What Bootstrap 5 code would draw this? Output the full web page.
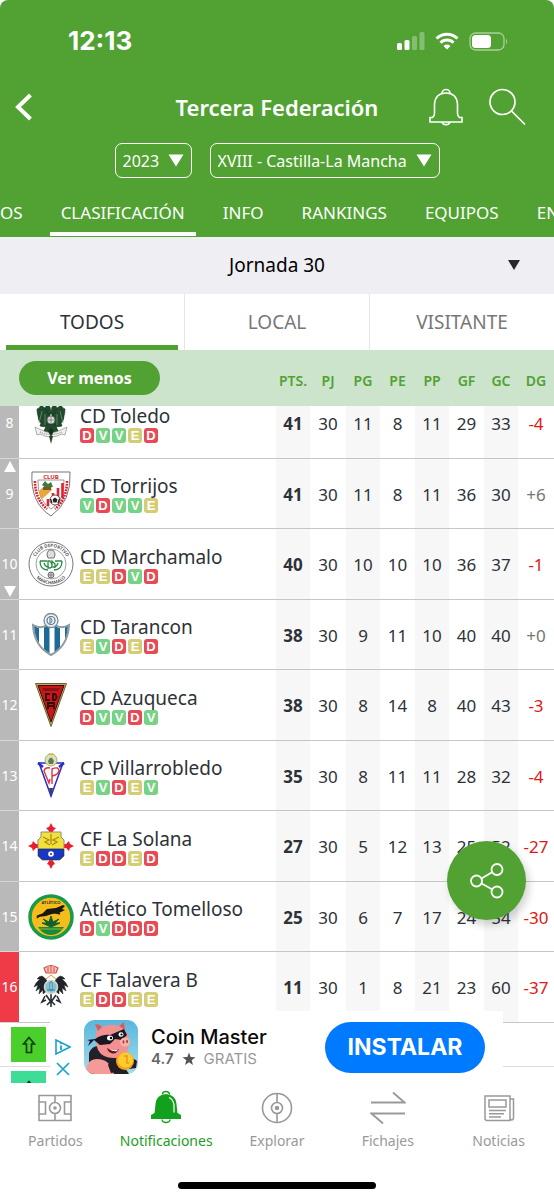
<!DOCTYPE html>
<html lang="es">
<head>
<meta charset="utf-8">
<meta name="viewport" content="width=device-width, initial-scale=1">
<title>Tercera Federación</title>
<link href="https://cdn.jsdelivr.net/npm/bootstrap@5.3.0/dist/css/bootstrap.min.css" rel="stylesheet">
<style>
  :root { --brand: #51a233; --ink: #2e3238; --pale: #cbe4cb; }
  body { font-family: "Noto Sans", sans-serif; color: var(--ink); background: #fff; }
  a { text-decoration: none; }
  svg { display: block; flex: none; }
  .app { height: 100vh; min-height: 800px; }

  .top { background: var(--brand); border-radius: 8px 8px 0 0; }
  .status { height: 82px; padding: 0 46px 0 68px; }
  .clock { font: 700 26px/32px Inter, sans-serif; }
  .bar { height: 50px; display: grid; grid-template-columns: 1fr auto 1fr; align-items: center; padding: 0 28px 0 28px; }
  .bar h1 { font-size: 22px; line-height: 30px; font-weight: 600; }
  .back { margin-left: -14px; }
  .plain { background: none; border: 0; padding: 0; color: inherit; }
  .pickers { gap: 18px; padding: 11px 0; }
  .picker { border: 1px solid #fff; border-radius: 7px; height: 35px; padding: 0 7px; gap: 8px; }
  select { appearance: none; border: 0; background: transparent; color: inherit; padding: 0; font-size: 16px; line-height: 24px; outline: 0; }
  .sections { height: 48px; gap: 16px; overflow: hidden; font-size: 17px; line-height: 24px; }
  .sections a { color: #fff; padding: 12px 11px 0; border-bottom: 4px solid transparent; height: 47px; white-space: nowrap; }
  .sections a:first-child { padding-left: 0; }
  .sections a.active { border-color: #fff; }

  .round { background: #efeef3; height: 57px; color: #000; position: relative; }
  .round select { width: 100%; text-align: center; font-size: 19px; line-height: 57px; height: 57px; }
  .round svg { position: absolute; right: 34px; top: 23px; }
  .venues a { flex: 1 1 0; height: 56px; padding: 0 6px; color: #777; font-size: 19px; border-left: 1px solid #e6e6e8; }
  .venues a:first-child { border-left: 0; }
  .venues span { height: 56px; line-height: 56px; }
  .venues .active { color: var(--ink); }
  .venues .active span { border-bottom: 5px solid var(--brand); }

  .board { min-height: 0; position: relative; }
  .scroller { height: 100%; overflow-y: auto; overflow-x: hidden; scrollbar-width: none; }
  .scroller::-webkit-scrollbar { display: none; }
  .standings { table-layout: fixed; width: 100%; border-collapse: separate; border-spacing: 0; }
  .standings th, .standings td { padding: 0; }
  .standings thead th { position: sticky; top: 0; z-index: 2; background: var(--pale); height: 56px; color: var(--brand); font-size: 14px; font-weight: 600; text-align: center; vertical-align: middle; padding-top: 4px; }
  .standings thead th:first-child { text-align: left; padding: 0 0 0 19px; }
  .less { background: var(--brand); color: #fff; border: 0; border-radius: 17px; width: 141px; height: 34px; font-size: 16px; line-height: 24px; font-weight: 700; }
  .standings tbody td { border-bottom: 1px solid #c6c6c6; font-size: 17px; text-align: center; vertical-align: middle; white-space: nowrap; padding-top: 2px; }
  .standings .shade { background: #f7f7f7; }
  .standings .pts { font-weight: 700; }
  .standings .neg { color: #e01616; }
  .standings .pos { color: #777; }
  .standings tbody td.rank { background: #b9b9b9; color: #fff; font-size: 14px; border-color: #d6d6d6; padding: 0; }
  .standings tbody td.rank.drop { background: #ef3b48; }
  .rank > div { display: grid; grid-template-rows: 1fr auto 1fr; justify-items: center; height: 69px; line-height: 20px; padding: 2px 0; }
  tr:nth-child(odd) > .rank > div { height: 70px; }
  .rank .down { grid-row: 3; align-self: end; }
  .rank .num { grid-row: 2; }
  .standings tbody td.club { padding: 0; }
  .team { gap: 6px; padding-left: 9px; }
  .team-name { font-size: 19px; line-height: 24px; text-align: left; }
  .form { gap: 2px; }
  .form i { width: 14px; height: 15px; border-radius: 3px; color: #fff; font: 700 13px/15px "Liberation Sans", sans-serif; text-align: center; }
  .r-D { background: #e84a55; } .r-V { background: #76d285; } .r-E { background: #d5cd74; }
  .legend-line { height: 43px; padding: 4px 0 0 11px; }
  .legend-line + .legend-line { border-top: 1px solid #dcdcdc; }
  .swatch { width: 35px; height: 35px; display: grid; place-items: center; }

  .share { position: absolute; right: 28px; bottom: 163px; width: 79px; height: 79px; border-radius: 50%; background: var(--brand); border: 0; z-index: 3; box-shadow: 3px 5px 8px rgba(0,0,0,.18); display: grid; place-items: center; padding: 0; }
  .promo { position: absolute; left: 50px; right: 51px; bottom: 0; height: 72px; background: #fff; z-index: 3; padding: 0 18px 0 5px; gap: 13px; font-family: Inter, sans-serif; }
  .ad-tools { gap: 7px; padding-top: 24px; }
  .promo-name { font-size: 20px; line-height: 24px; font-weight: 500; color: #0a0a0a; }
  .promo-meta { font-size: 15px; line-height: 20px; color: #999; gap: 8px; }
  .promo-meta b { color: #666; font-weight: 600; }
  .install { background: #007aff; color: #fff; border: 0; border-radius: 26px; width: 160px; height: 51px; font-size: 23px; font-weight: 700; }

  .tabbar { padding-top: 6px; }
  .tabbar a { flex: 1 1 0; color: #999; font-size: 14px; line-height: 20px; gap: 6px; }
  .tabbar a.active { color: #1d9d24; }
  .home-bar { width: 198px; height: 7px; border-radius: 4px; background: #000; margin: 31px auto 11px; }
</style>
</head>
<body>
<div class="app d-flex flex-column">
  <header class="top text-white flex-shrink-0">
    <div class="status d-flex align-items-center justify-content-between">
      <span class="clock">12:13</span>
      <span class="d-flex align-items-center">
        <svg width="28" height="18" viewBox="0 0 28 18" fill="#fff"><rect x="0" y="11" width="5" height="7" rx="1.5"/><rect x="7.500" y="8" width="5" height="10" rx="1.500"/><rect x="15" y="4" width="5" height="14" rx="1.500" opacity=".3"/><rect x="22.500" y="0" width="5" height="18" rx="1.500" opacity=".3"/></svg>
        <svg class="mx-2" width="28" height="18" viewBox="0 0 24 18" fill="none" stroke="#fff" stroke-width="3"><path d="M1.500 6.500a15 15 0 0 1 21 0M5.500 10.800a9 9 0 0 1 13 0"/><path d="M12 17.500l-3.500-3.600a5 5 0 0 1 7 0z" fill="#fff" stroke="none"/></svg>
        <svg width="39" height="19" viewBox="0 0 39 19"><rect x="1" y="1" width="34" height="17" rx="5.500" fill="none" stroke="#fff" stroke-opacity=".5" stroke-width="1.300"/><rect x="3" y="3" width="19" height="13" rx="3.500" fill="#fff"/><path d="M37 6.500q2 3 0 6z" fill="#fff" opacity=".55"/></svg>
      </span>
    </div>
    <div class="bar">
      <button class="plain back text-start" aria-label="Volver"><svg width="20" height="28" viewBox="0 0 20 28" fill="none" stroke="#fff" stroke-width="4"><path d="M16.500 2L4 14l12.500 12"/></svg></button>
      <h1 class="m-0">Tercera Federación</h1>
      <span class="d-flex justify-content-end gap-4">
        <button class="plain" aria-label="Avisos"><svg width="36" height="38" viewBox="0 0 36 38" fill="none" stroke="#fff" stroke-width="1.600"><path d="M14 5.500a4 4 0 0 1 8 0M2 34v-4.500h2.500q2-1.500 2-4V16q1-11 11.500-11T29.500 16v9.500q0 2.500 2 4H34V34zM14 34.500a4.200 3 0 0 0 8 0"/></svg></button>
        <button class="plain" aria-label="Buscar"><svg width="38" height="38" viewBox="0 0 38 38" fill="none" stroke="#fff" stroke-width="1.700"><circle cx="14.500" cy="14" r="12.500"/><path d="M23.500 23L37 36.500"/></svg></button>
      </span>
    </div>
    <div class="pickers d-flex justify-content-center">
      <label class="picker d-flex align-items-center"><select aria-label="Temporada"><option>2023</option></select><svg width="16" height="13" viewBox="0 0 16 13" fill="#fff"><path d="M.5.500h15L8 12.500z"/></svg></label>
      <label class="picker d-flex align-items-center"><select aria-label="Grupo"><option>XVIII - Castilla-La Mancha</option></select><svg width="16" height="13" viewBox="0 0 16 13" fill="#fff"><path d="M.5.500h15L8 12.500z"/></svg></label>
    </div>
    <nav class="sections d-flex">
      <a href="#">OS</a><a href="#" class="active">CLASIFICACIÓN</a><a href="#">INFO</a><a href="#">RANKINGS</a><a href="#">EQUIPOS</a><a href="#">EN</a>
    </nav>
  </header>

  <div class="round flex-shrink-0">
    <select aria-label="Jornada"><option>Jornada 30</option></select>
    <svg width="12" height="10" viewBox="0 0 12 10" fill="#25282e"><path d="M0 0h12L6 10z"/></svg>
  </div>
  <nav class="venues d-flex flex-shrink-0 text-center">
    <a href="#" class="active"><span class="d-block">TODOS</span></a><a href="#"><span class="d-block">LOCAL</span></a><a href="#"><span class="d-block">VISITANTE</span></a>
  </nav>

  <main class="board flex-fill">
    <div class="scroller" id="scroller">
      <table class="standings">
        <colgroup><col style="width:19px"><col><col style="width:34px"><col style="width:36px"><col style="width:34px"><col style="width:35px"><col style="width:34px"><col style="width:35px"><col style="width:34px"><col style="width:36px"></colgroup>
        <thead><tr><th colspan="2"><button class="less">Ver menos</button></th><th>PTS.</th><th>PJ</th><th>PG</th><th>PE</th><th>PP</th><th>GF</th><th>GC</th><th>DG</th></tr></thead>
        <tbody id="rows"></tbody>
      </table>
      <div class="legend-line"><div class="swatch" style="background:#4bcf2c"><svg width="14" height="18" viewBox="0 0 14 18" fill="none" stroke="#143c0c" stroke-width="1.700"><path d="M7 1.500L1.500 8H4.500v8.500h5V8h3z"/></svg></div></div>
      <div class="legend-line"><div class="swatch" style="background:#3ddc97"><svg width="14" height="18" viewBox="0 0 14 18" fill="none" stroke="#143c0c" stroke-width="1.700"><path d="M7 1.500L1.500 8H4.500v8.500h5V8h3z"/></svg></div></div>
    </div>

    <button class="share" aria-label="Compartir"><svg width="36" height="38" viewBox="0 0 36 38" fill="none" stroke="#fff" stroke-width="1.800"><circle cx="7.500" cy="19" r="5.500"/><circle cx="28" cy="7.500" r="5.500"/><circle cx="28" cy="30" r="5.500"/><path d="M12.500 16.500L23 10.300M12.500 21.500L23 27.300"/></svg></button>

    <aside class="promo d-flex align-items-center">
      <span class="ad-tools d-flex flex-column align-self-start">
        <svg class="mt-1" width="16" height="16" viewBox="0 0 16 16" fill="none" stroke="#17a3cf" stroke-width="1.600"><path d="M1 1v14L15 8z"/><path d="M6 6.500V11M6 3.800v1.400" stroke-width="1.800"/></svg>
        <svg width="16" height="14" viewBox="0 0 16 14" fill="none" stroke="#17a3cf" stroke-width="1.700"><path d="M2 1l12 12M14 1L2 13"/></svg>
      </span>
      <svg width="54" height="54" viewBox="0 0 54 54">
        <defs><clipPath id="appclip"><rect width="54" height="54" rx="11"/></clipPath><linearGradient id="sky" x1="0" y1="0" x2="0" y2="1"><stop offset="0" stop-color="#58b7dc"/><stop offset="1" stop-color="#a6dcea"/></linearGradient></defs>
        <g clip-path="url(#appclip)">
          <rect width="54" height="54" fill="url(#sky)"/>
          <path d="M5 54V33q3-7 9-7l18 8 13 20z" fill="#23202a"/>
          <path d="M2 54q0-15 11-15 13 0 17 15z" fill="#f49a97"/>
          <path d="M13 9l-2-5q6 0 8 3 8-4 15-1l6-4 1 8q5 7 4 14-1 12-13 14-13 1-18-8-4-9-1-21z" fill="#f2918f"/>
          <path d="M11 4q5 0 7 3l-4 4zM40 2l1 8-6-4z" fill="#cc5f68"/>
          <path d="M3 20l8-1q8-5 15-4l14-6 3 6-5 5-7-1-5 5-10 1-6-5-6 6 2-5z" fill="#191722"/>
          <ellipse cx="26" cy="18" rx="3" ry="2.500" fill="#fff"/><ellipse cx="37" cy="14.500" rx="2.500" ry="2.200" fill="#fff"/><circle cx="27" cy="18" r="1.200"/><circle cx="37.500" cy="14.500" r="1.100"/>
          <ellipse cx="41" cy="22" rx="5" ry="4.500" fill="#fbb0a8"/><ellipse cx="39.500" cy="22" rx=".9" ry="1.700" fill="#9a3c45"/><ellipse cx="43" cy="21.500" rx=".9" ry="1.700" fill="#9a3c45"/>
          <path d="M23 28q6 4 12 1-3 6-8 4-3-1-4-5z" fill="#611724"/><path d="M25 29q5 2 9 .5l-1 1.500q-4 1-8-2z" fill="#fff"/>
          <path d="M24 45q2-5 9-3l4 9-10 2zM46 41q3-4 7 0l-1 7-7 1z" fill="#231c20"/>
          <circle cx="41" cy="41" r="9" fill="#f2a71b"/><circle cx="41.500" cy="40" r="7.500" fill="#fecb2e"/><path d="M40 36h3v7h2" fill="none" stroke="#e99b13" stroke-width="1.500"/>
        </g>
      </svg>
      <span class="me-auto text-nowrap">
        <span class="promo-name d-block">Coin Master</span>
        <span class="promo-meta d-flex align-items-center"><b>4.7</b><svg width="14" height="14" viewBox="0 0 14 14" fill="#555"><path d="M7 .5l1.700 4.600 4.800.2-3.800 3 1.300 4.700L7 10.300 3 13l1.300-4.700-3.800-3 4.800-.2z"/></svg><span>GRATIS</span></span>
      </span>
      <button class="install">INSTALAR</button>
    </aside>
  </main>

  <footer class="flex-shrink-0">
    <nav class="tabbar d-flex">
      <a href="#" class="d-flex flex-column align-items-center"><svg width="36" height="36" viewBox="0 0 36 36" fill="none" stroke="#999" stroke-width="1.600"><path d="M2 6.500h32v25H2zM18 6.500v25M2 13h6.500v12H2M34 13h-6.500v12H34"/><circle cx="18" cy="19" r="5.500" fill="#fff"/><circle cx="18" cy="19" r="1" fill="#999"/></svg>Partidos</a>
      <a href="#" class="active d-flex flex-column align-items-center"><svg width="36" height="36" viewBox="0 0 36 36" fill="#13a01c"><path d="M3 30v-4l3.500-2Q7 21 7.500 15 8 6 18 5q10 1 10.500 10 .5 6 1 9l3.500 2v4z"/><path d="M14.500 5.500a3.500 3 0 0 1 7 0M14 30.500a4 3 0 0 0 8 0" fill="none" stroke="#13a01c" stroke-width="1.500"/><path d="M21 8.500q4.500 2 5 8v7" fill="none" stroke="#fff" stroke-width="1.200"/></svg>Notificaciones</a>
      <a href="#" class="d-flex flex-column align-items-center"><svg width="36" height="36" viewBox="0 0 36 36" fill="none" stroke="#999" stroke-width="1.600"><circle cx="18" cy="19" r="14.500"/><path d="M18 4.500v29"/><circle cx="18" cy="19" r="5.500" fill="#fff"/><circle cx="18" cy="19" r="1.500" fill="#999"/></svg>Explorar</a>
      <a href="#" class="d-flex flex-column align-items-center"><svg width="36" height="36" viewBox="0 0 36 36" fill="none" stroke="#999" stroke-width="1.800"><path d="M1 13.500h33.500L23 3.500M35 24.500H1.500L13 34.500"/></svg>Fichajes</a>
      <a href="#" class="d-flex flex-column align-items-center"><svg width="36" height="36" viewBox="0 0 36 36" fill="none" stroke="#999" stroke-width="1.500"><path d="M4 7h25v24.500H6q-2 0-2-2zM29 10h3.500v19.500a1.800 1.800 0 0 1-3.500 0M8 11h17v7H8zM8 21.500h17M8 24.800h15M8 28h12"/></svg>Noticias</a>
    </nav>
    <div class="home-bar"></div>
  </footer>
</div>

<script src="https://cdn.jsdelivr.net/npm/bootstrap@5.3.0/dist/js/bootstrap.bundle.min.js"></script>
<script>
const eagleWing = 'M-1-6q-4-6-9-9-1 3-4 4 0 4 1 7 0 5 3 7l-1 3q5 2 10-1z';
const crests = {
  toledo: `<g fill="#1f4a2c" stroke="#163220" stroke-width=".6"><path transform="translate(23 20)" d="${eagleWing}"/><path transform="translate(23 20) scale(-1 1)" d="${eagleWing}"/><path d="M17 8q2-5 5-1l1 5 1-5q3-4 5 1l-3 6h-6zM19 24h8l3 7-7 4-7-4z"/></g><path d="M14 11l-3 12M32 11l3 12M17 14v11M29 14v11" stroke="#6d9474" stroke-width=".8"/><circle cx="23" cy="20" r="4" fill="#dde3db" stroke="#555" stroke-width=".8"/><path d="M20 20h6M23 17v6" stroke="#777" stroke-width=".8"/><path d="M7 27l4 2q12 7 24 0l4-2-2 8-3-1q-11 6-22 0l-3 1z" fill="#f3f3ef" stroke="#8b8b88" stroke-width=".7"/><path d="M12 32q11 5 22 0" stroke="#9a9a98" stroke-width="1.400" stroke-dasharray="1 1" fill="none"/><path d="M21 36h4l-2 8z" fill="#29452e"/><path d="M20 31l3-3 3 3-3 6z" fill="#17301e"/>`,
  torrijos: `<path d="M4 1h38q2 29-19 44Q2 32 4 1z" fill="#fff" stroke="#666" stroke-width=".9"/><path d="M10 9h26q1 20-13 29Q9 29 10 9z" fill="#fff" stroke="#555" stroke-width=".6"/><path d="M11 20q6-7 12-3l1 2-10 9q-3-4-3-8z" fill="#e9a63a"/><path d="M14 14l3-4 3 3 3-2 2 5-7 1z" fill="#3d7a3c"/><path d="M15 16h8v3h-8z" fill="#76592a"/><g stroke="#dc2431" stroke-width="2.600"><path d="M34.500 12v15M30 17v16M25 22v4M20 28v7"/></g><circle cx="27" cy="29" r="5" fill="#fff" stroke="#333" stroke-width=".8"/><path d="M27 26.500l2.500 2-1 3h-3l-1-3z" fill="#222"/><path d="M22.500 28l1.500 4M31.500 28L30 32" stroke="#222" stroke-width="1.300"/><text x="23" y="7.500" text-anchor="middle" font-size="6" font-weight="700" fill="#e01d2a">CLUB</text><path d="M7 10q0 18 12 28" fill="none" stroke="#e01d2a" stroke-width="2.600" stroke-dasharray="1.800 1"/><path d="M39 10q0 18-12 28" fill="none" stroke="#e01d2a" stroke-width="2.600" stroke-dasharray="1.800 1"/>`,
  marchamalo: `<circle cx="23" cy="23" r="22" fill="#fff" stroke="#666" stroke-width=".9"/><circle cx="23" cy="23" r="15" fill="#fff" stroke="#777" stroke-width=".7"/><path id="mTop" d="M6 23a17 17 0 0 1 34 0" fill="none"/><path id="mBot" d="M2.800 23a20.200 20.200 0 0 0 40.400 0" fill="none"/><g font-size="4.500" font-weight="600" fill="#444"><text text-anchor="middle"><textPath href="#mTop" startOffset="50%">CLUB DEPORTIVO</textPath></text><text text-anchor="middle"><textPath href="#mBot" startOffset="50%">MARCHAMALO</textPath></text></g><g fill="none" stroke="#2b8b45" stroke-width="1.300"><path d="M12 20h7M12 20q0 9 8 9M34 20h-7M34 20q0 9-8 9M16 22q1 4 5 4M30 22q-1 4-5 4M20 20v7h2q4-1 0-7zM24 27v-7l3 3v4"/></g><path d="M19 14q0-5 4-5t4 5l-1 3h-6z" fill="#ddd" stroke="#555" stroke-width=".8"/><circle cx="23" cy="34" r="3" fill="#ccc" stroke="#555" stroke-width=".8"/><path d="M20 34h6M23 31v6" stroke="#666" stroke-width=".6"/>`,
  tarancon: `<path d="M5 13q7 4 12 1h12q5 3 12-1-1 21-18 30Q6 34 5 13z" fill="#fff"/><clipPath id="tc"><path d="M6 14q7 4 11 1h12q4 3 11-1-1 20-17 28Q7 34 6 14z"/></clipPath><g clip-path="url(#tc)" fill="#1d6b96"><path d="M5 10h6v30H5zM16 10h5.500v34H16zM26.500 10H32v34h-5.500zM37 10h5v30h-5z"/></g><path d="M5 13q7 4 12 1h12q5 3 12-1-1 21-18 30Q6 34 5 13z" fill="none" stroke="#8d9aa1" stroke-width="2"/><circle cx="23" cy="8.500" r="7" fill="#eef3f6" stroke="#7d8c96" stroke-width="1.300"/><circle cx="23" cy="8.500" r="4" fill="none" stroke="#57748a" stroke-width="1.200"/><path d="M22 5.500v6q4-3 0-6" fill="none" stroke="#57748a"/>`,
  azuqueca: `<path d="M7.500 1.500h31L23 44.500z" fill="#c8a55e" stroke="#6d6330" stroke-width="1"/><path d="M10 3.500h26L23 40z" fill="#c8171b" stroke="#35100b" stroke-width="1"/><g fill="none" stroke="#320b0b" stroke-width="1.800"><path d="M22 12h-4v6h4M25 12v6h2q3-3 0-6zM20 27v-6h6v6M20 24h6"/></g><path d="M14 6h18l-2 3H16z" fill="#8b1115"/>`,
  villa: `<path d="M11 10h24L23 43z" fill="#fff" stroke="#2a2bc8" stroke-width="1.500"/><path d="M10 10l5 4M36 10l-5 4" stroke="#2a2bc8" stroke-width="2.500"/><g fill="none" stroke="#e0333f" stroke-width="1.400"><path d="M22 15q-5-1-6 3l5 12 1-4M24 31V16q7-3 7 2-1 4-7 5"/></g><circle cx="23" cy="7" r="6" fill="#d9e2b4" stroke="#a9b07c"/><path d="M20 8q3-7 6 0l-1 3h-4z" fill="#647a52"/><path d="M20 2l1-2 2 1 2-1 1 2" fill="#d8b23c"/><path d="M21 35h4l-2 9z" fill="#3a3e63"/>`,
  solana: `<g fill="#ec1c2b"><path d="M23 0l2 4 3 1-3 3v30l2 3-2 1-2 4-2-4-2-1 2-3V8l-3-3 3-1zM0 23l4-2 1-3 3 3h30l3-3 1 3 4 2-4 2-1 3-3-3H8l-3 3-1-3z"/></g><path d="M13 9h20v5l3 3v16l-4 4H14l-4-4V17l3-3z" fill="#f4e03b" stroke="#8a8a8a"/><path d="M10.500 26h25v7l-4 3.500h-17l-4-3.500z" fill="#1638c8" stroke="#10205e" stroke-width=".7"/><path d="M15 14l6 3-4 2 5 3M31 14l-6 3 4 2-5 3M23 11v10" fill="none" stroke="#a98d1a" stroke-width="1.300"/><circle cx="23" cy="31" r="2.800" fill="#fff"/><circle cx="23" cy="31" r="1" fill="#333"/>`,
  tomelloso: `<circle cx="23" cy="23" r="21" fill="#f5bd19" stroke="#199a4a" stroke-width="3.500"/><path d="M9 22l6-3 4-4 9-1 7-3 2 1-3 3 3 1-6 3-7 1-6 2-8 1-2-1 5-2z" fill="#171a12"/><path d="M12 21l-3 3M25 18l7 2" stroke="#171a12" stroke-width="1.500"/><path d="M10 33h26q-5 8-13 8t-13-8z" fill="#178a40"/><path d="M23 33l-9-4 5 0-4-4 6 3 2-6 2 6 6-3-4 4h5z" fill="#12602b" stroke="#12602b"/><path d="M12 35h22" stroke="#8fb52b"/><text x="23" y="10" text-anchor="middle" font-size="4" font-weight="700" fill="#333">ATLÉTICO</text>`,
  talavera: `<g fill="#20242a" stroke="#20242a" stroke-width=".5"><path transform="translate(23 24)" d="M-3-5q-2-5-6-7-3 0-5 3l3 0q-4 3-6 8l4-2-2 6 4-3-1 6 4-4v4l5-4z"/><path transform="translate(23 24) scale(-1 1)" d="M-3-5q-2-5-6-7-3 0-5 3l3 0q-4 3-6 8l4-2-2 6 4-3-1 6 4-4v4l5-4z"/></g><path d="M23 30v13M17 32l-3 6 4-2M29 32l3 6-4-2M18 31l5 7 5-7M19 41l4-4 4 4" fill="none" stroke="#2a2d33" stroke-width="1.600"/><path d="M16 4q7-5 14 0l-2 5H18z" fill="#f5c9bd" stroke="#d44a42" stroke-width="1.200"/><path d="M20 3v5M23 2v6M26 3v5" stroke="#d44a42"/><path d="M18 15l5-4 5 4" stroke="#d99a3a" fill="none"/><circle cx="23" cy="23" r="6.500" fill="#7fc4d8" stroke="#d8d6c5" stroke-width="1.600"/><path d="M22 18h2v8h-2zM19 26h8" stroke="#3a7d9c" fill="#e8f3f5"/>`
};
const teams = [
  [8,'toledo','CD Toledo','DVVED',41,30,11,8,11,29,33,'-4'],
  [9,'torrijos','CD Torrijos','VDVVE',41,30,11,8,11,36,30,'+6'],
  [10,'marchamalo','CD Marchamalo','EEDVD',40,30,10,10,10,36,37,'-1'],
  [11,'tarancon','CD Tarancon','EVDED',38,30,9,11,10,40,40,'+0'],
  [12,'azuqueca','CD Azuqueca','DVVDV',38,30,8,14,8,40,43,'-3'],
  [13,'villa','CP Villarrobledo','EVDEV',35,30,8,11,11,28,32,'-4'],
  [14,'solana','CF La Solana','EDDED',27,30,5,12,13,25,52,'-27'],
  [15,'tomelloso','Atlético Tomelloso','DVDDD',25,30,6,7,17,24,54,'-30'],
  [16,'talavera','CF Talavera B','EDDEE',11,30,1,8,21,23,60,'-37']
];
const arrows = {
  9: '<svg class="up" width="12" height="11" viewBox="0 0 12 11" fill="#fff"><path d="M6 0l6 11H0z"/></svg>',
  10: '<svg class="down" width="12" height="11" viewBox="0 0 12 11" fill="#fff"><path d="M0 0h12L6 11z"/></svg>'
};
document.getElementById('rows').innerHTML = teams.map(([pos, crest, name, form, ...n]) => {
  const cells = n.map((v, i) => {
    const cls = [i % 2 === 0 ? 'shade' : '', i === 0 ? 'pts' : '', i === 7 ? (v[0] === '-' ? 'neg' : 'pos') : ''].join(' ');
    return `<td class="${cls}">${v}</td>`;
  }).join('');
  return `<tr><td class="rank ${pos === 16 ? 'drop' : ''}"><div>${arrows[pos] || ''}<span class="num">${pos}</span></div></td>
    <td class="club"><div class="team d-flex align-items-center"><svg width="46" height="46" viewBox="0 0 46 46">${crests[crest]}</svg>
    <div><div class="team-name">${name}</div><div class="form d-flex">${[...form].map(r => `<i class="r-${r}">${r}</i>`).join('')}</div></div></div></td>${cells}</tr>`;
}).join('');
document.getElementById('scroller').scrollTop = 18;
</script>
</body>
</html>
